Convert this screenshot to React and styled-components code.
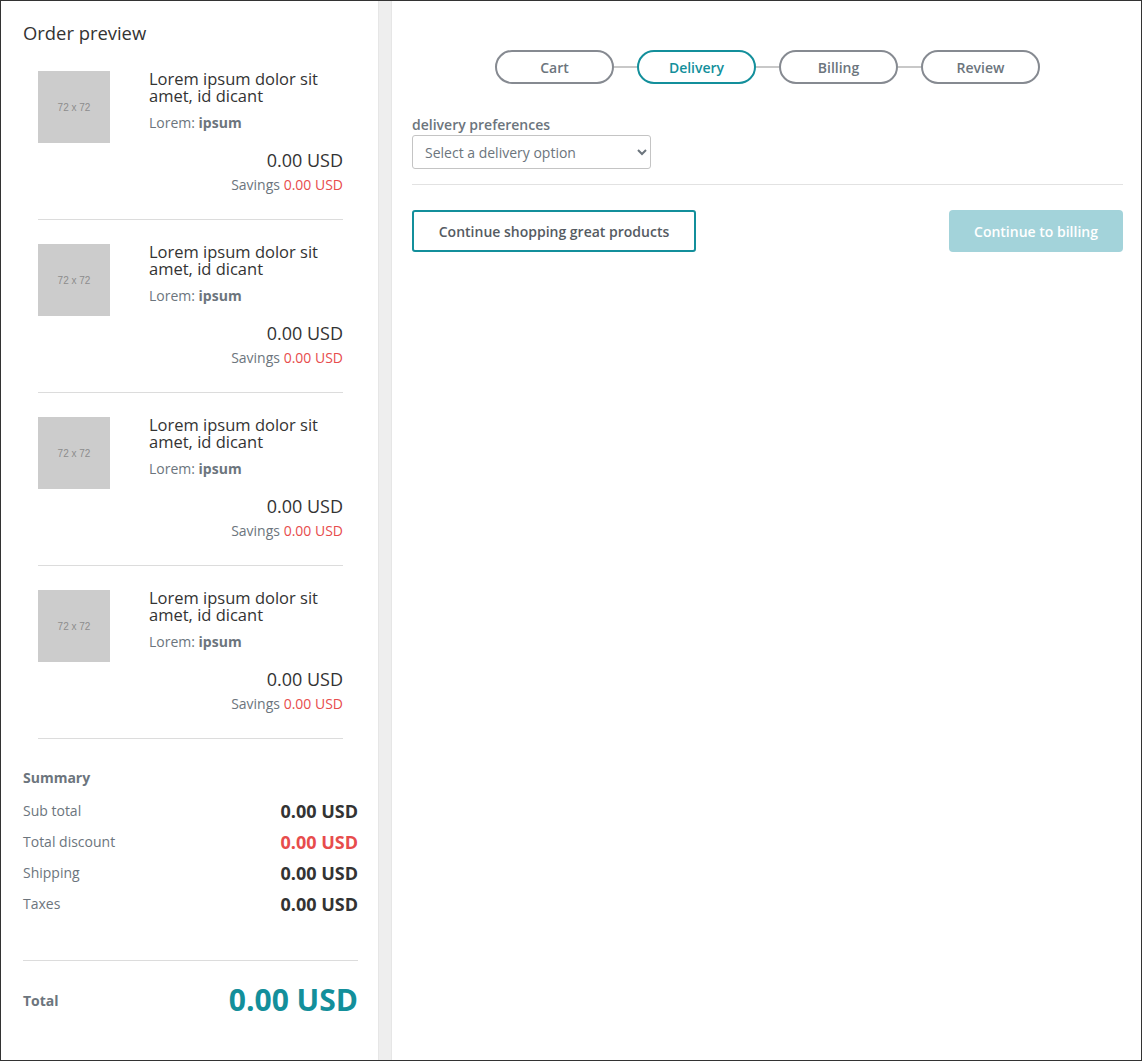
import React from 'react'
import styled, { createGlobalStyle } from 'styled-components'

const GlobalStyle = createGlobalStyle`
  html, body {
    margin: 0;
    padding: 0;
    background: #fff;
  }
  body {
    font-family: 'Open Sans', 'Noto Sans', sans-serif;
    color: #333;
  }
  * {
    box-sizing: border-box;
  }
`

const TEAL = '#138f9b'
const RED = '#e74c4c'
const GREY = '#6c757d'

const items = [1, 2, 3, 4]
const steps = ['Cart', 'Delivery', 'Billing', 'Review']
const summary = [
  { label: 'Sub total', value: '0.00 USD' },
  { label: 'Total discount', value: '0.00 USD', discount: true },
  { label: 'Shipping', value: '0.00 USD' },
  { label: 'Taxes', value: '0.00 USD' },
]

const App = () => {
  return (
    <>
      <GlobalStyle />
      <Frame>
        <Sidebar>
          <Heading>Order preview</Heading>
          <ItemList>
            {items.map((i) => (
              <Item key={i}>
                <Thumb>72 x 72</Thumb>
                <Info>
                  <Title>Lorem ipsum dolor sit amet, id dicant</Title>
                  <Meta>
                    Lorem: <b>ipsum</b>
                  </Meta>
                  <Price>0.00 USD</Price>
                  <Savings>
                    Savings <span>0.00 USD</span>
                  </Savings>
                </Info>
              </Item>
            ))}
          </ItemList>
          <Summary>
            <SummaryTitle>Summary</SummaryTitle>
            {summary.map((row) => (
              <SummaryRow key={row.label}>
                <span>{row.label}</span>
                <Amount $discount={row.discount}>{row.value}</Amount>
              </SummaryRow>
            ))}
          </Summary>
          <TotalRow>
            <span>Total</span>
            <TotalAmount>0.00 USD</TotalAmount>
          </TotalRow>
        </Sidebar>
        <Gutter />
        <Main>
          <Stepper>
            {steps.map((s, index) => (
              <React.Fragment key={s}>
                {index > 0 && <Connector />}
                <Step $active={s === 'Delivery'}>{s}</Step>
              </React.Fragment>
            ))}
          </Stepper>
          <Label htmlFor='delivery'>delivery preferences</Label>
          <Select id='delivery' defaultValue=''>
            <option value='' disabled>
              Select a delivery option
            </option>
            <option value='standard'>Standard</option>
            <option value='express'>Express</option>
          </Select>
          <Divider />
          <Actions>
            <OutlineButton type='button'>Continue shopping great products</OutlineButton>
            <PrimaryButton type='button' disabled>
              Continue to billing
            </PrimaryButton>
          </Actions>
        </Main>
      </Frame>
    </>
  )
}

const Frame = styled.div`
  display: flex;
  width: 1142px;
  height: 1061px;
  border: 1px solid #333;
  overflow: hidden;
`

const Sidebar = styled.aside`
  width: 377px;
  flex-shrink: 0;
  padding: 20px 20px 0 22px;
`

const Heading = styled.h2`
  margin: 0 0 2px;
  font-size: 18.4px;
  line-height: 24px;
  font-weight: 400;
  color: #333;
`

const ItemList = styled.div`
  margin: 0 15px 0 15px;
`

const Item = styled.div`
  display: grid;
  grid-template-columns: 72px 1fr;
  column-gap: 39px;
  padding: 24px 0 24px;
  border-bottom: 1px solid #dcdcdc;
`

const Thumb = styled.div`
  width: 72px;
  height: 72px;
  background: #cccccc;
  color: #8c8c8c;
  font-family: 'Liberation Sans', Arial, sans-serif;
  font-size: 10px;
  display: flex;
  align-items: center;
  justify-content: center;
`

const Info = styled.div`
  display: flex;
  flex-direction: column;
`

const Title = styled.h3`
  margin: -1px 0 0;
  font-size: 16.5px;
  line-height: 17px;
  font-weight: 400;
  color: #333;
`

const Meta = styled.div`
  margin-top: 9px;
  font-size: 14px;
  line-height: 20px;
  color: ${GREY};
  b {
    font-weight: 700;
  }
`

const Price = styled.div`
  margin-top: 15px;
  text-align: right;
  font-size: 18px;
  line-height: 24px;
  color: #333;
`

const Savings = styled.div`
  margin-top: 3px;
  text-align: right;
  font-size: 14px;
  line-height: 20px;
  color: ${GREY};
  span {
    color: ${RED};
  }
`

const Summary = styled.div`
  margin-top: 29px;
  padding-bottom: 41px;
  border-bottom: 1px solid #dcdcdc;
`

const SummaryTitle = styled.div`
  font-size: 14px;
  line-height: 20px;
  font-weight: 700;
  color: ${GREY};
  margin-bottom: 7px;
`

const SummaryRow = styled.div`
  display: flex;
  justify-content: space-between;
  align-items: center;
  height: 31px;
  font-size: 14px;
  color: ${GREY};
`

const Amount = styled.span`
  font-size: 18px;
  font-weight: 700;
  color: ${(p) => (p.$discount ? RED : '#333')};
`

const TotalRow = styled.div`
  display: flex;
  justify-content: space-between;
  align-items: center;
  padding-top: 19px;
  font-size: 14px;
  font-weight: 700;
  color: ${GREY};
`

const TotalAmount = styled.span`
  font-size: 30px;
  line-height: 40px;
  font-weight: 700;
  color: ${TEAL};
`

const Gutter = styled.div`
  width: 14px;
  flex-shrink: 0;
  background: #eeeeee;
  border-left: 1px solid #e6e6e6;
  border-right: 1px solid #e6e6e6;
`

const Main = styled.main`
  flex: 1;
  padding: 49px 18px 0 20px;
  display: flex;
  flex-direction: column;
  align-items: flex-start;
`

const Stepper = styled.div`
  align-self: stretch;
  display: flex;
  justify-content: center;
  align-items: center;
  margin-bottom: 31px;
`

const Step = styled.div`
  width: 119px;
  height: 34px;
  border-radius: 17px;
  border: 2px solid ${(p) => (p.$active ? TEAL : '#868a91')};
  color: ${(p) => (p.$active ? TEAL : GREY)};
  font-size: 14px;
  font-weight: 600;
  display: flex;
  align-items: center;
  justify-content: center;
`

const Connector = styled.div`
  width: 23px;
  height: 2px;
  background: #c8c8c8;
`

const Label = styled.label`
  font-size: 14px;
  line-height: 20px;
  font-weight: 600;
  color: ${GREY};
`

const Select = styled.select`
  width: 239px;
  height: 34px;
  padding: 0 8px;
  border: 1px solid #c4c4c4;
  border-radius: 3px;
  background: #fff;
  font-family: 'Open Sans', 'Noto Sans', sans-serif;
  font-size: 14px;
  color: ${GREY};
`

const Divider = styled.hr`
  align-self: stretch;
  margin: 15px 0 25px;
  border: none;
  border-top: 1px solid #e2e2e2;
`

const Actions = styled.div`
  align-self: stretch;
  display: flex;
  justify-content: space-between;
`

const OutlineButton = styled.button`
  width: 284px;
  height: 42px;
  border: 2px solid ${TEAL};
  border-radius: 3px;
  background: #fff;
  font-family: 'Open Sans', 'Noto Sans', sans-serif;
  font-size: 14px;
  font-weight: 600;
  color: #555b62;
  cursor: pointer;
`

const PrimaryButton = styled.button`
  width: 174px;
  height: 42px;
  border: none;
  border-radius: 4px;
  background: #a3d3da;
  font-family: 'Open Sans', 'Noto Sans', sans-serif;
  font-size: 14px;
  font-weight: 600;
  color: #fff;
`

export default App
